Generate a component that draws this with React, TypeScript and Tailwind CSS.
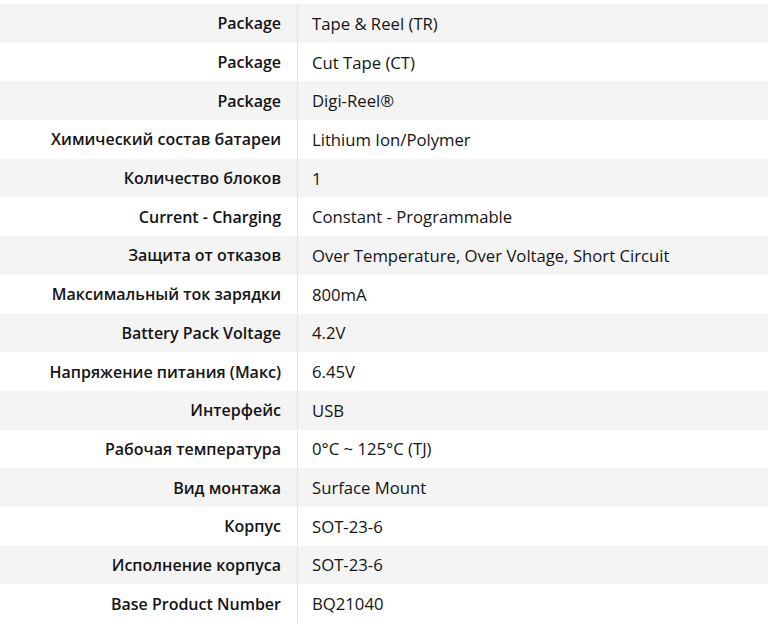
const rows: [string, string][] = [
    ['Package', 'Tape & Reel (TR)'],
    ['Package', 'Cut Tape (CT)'],
    ['Package', 'Digi-Reel®'],
    ['Химический состав батареи', 'Lithium Ion/Polymer'],
    ['Количество блоков', '1'],
    ['Current - Charging', 'Constant - Programmable'],
    ['Защита от отказов', 'Over Temperature, Over Voltage, Short Circuit'],
    ['Максимальный ток зарядки', '800mA'],
    ['Battery Pack Voltage', '4.2V'],
    ['Напряжение питания (Макс)', '6.45V'],
    ['Интерфейс', 'USB'],
    ['Рабочая температура', '0°C ~ 125°C (TJ)'],
    ['Вид монтажа', 'Surface Mount'],
    ['Корпус', 'SOT-23-6'],
    ['Исполнение корпуса', 'SOT-23-6'],
    ['Base Product Number', 'BQ21040'],
]

export default function App() {
    return (
        <div className="w-[768px] h-[623px] overflow-hidden bg-white pt-[4px] font-['Open_Sans',sans-serif] text-[#141414]">
            {rows.map(([label, value], i) => (
                <div
                    key={i}
                    className={`flex h-[38.7px] items-center ${i % 2 === 0 ? 'bg-[#f4f4f4]' : 'bg-white'}`}
                >
                    <div className="flex h-full w-[298px] items-center justify-end border-r border-[#e4e4e4] pr-4 text-[16px] font-semibold">
                        {label}
                    </div>
                    <div className="pl-[14px] text-[16.7px]">{value}</div>
                </div>
            ))}
        </div>
    )
}
